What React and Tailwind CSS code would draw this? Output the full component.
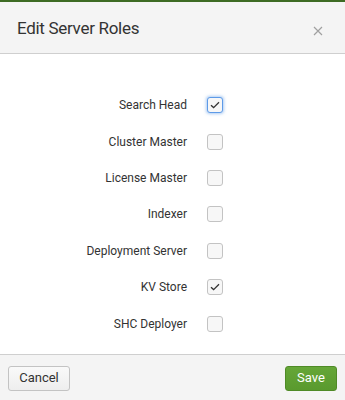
import { useState } from 'react';

const ROLES = [
  { label: 'Search Head', checked: true, focus: true },
  { label: 'Cluster Master', checked: false },
  { label: 'License Master', checked: false },
  { label: 'Indexer', checked: false },
  { label: 'Deployment Server', checked: false },
  { label: 'KV Store', checked: true },
  { label: 'SHC Deployer', checked: false },
];

const Check = () => (
  <svg width="10" height="8" viewBox="0 0 10 8" fill="none">
    <path d="M1 4.2 L3.6 6.6 L9 1.2" stroke="#333" strokeWidth="1.3" />
  </svg>
);

function RoleRow({ role }) {
  const [checked, setChecked] = useState(role.checked);
  return (
    <div className="flex items-center h-[36.4px]">
      <div className="w-[187px] text-right text-[12px] text-[#333]">{role.label}</div>
      <button
        onClick={() => setChecked(!checked)}
        className={`ml-[20px] w-[16px] h-[16px] rounded-[3px] border flex items-center justify-center bg-[#f7f7f7] ${
          role.focus ? 'border-[#5e9be8] shadow-[0_0_3px_1px_rgba(94,155,232,0.5)]' : 'border-[#c3c3c3]'
        }`}
      >
        {checked && <Check />}
      </button>
    </div>
  );
}

export default function App() {
  return (
    <div className="w-[345px] h-[400px] bg-white flex flex-col font-['Roboto',_'Liberation_Sans',_sans-serif] overflow-hidden">
      <div className="h-[2px] bg-[#3d6b24]" />
      {/* Header */}
      <div className="h-[52px] bg-[#f4f4f4] border-b border-[#cfcfcf] flex items-center justify-between pl-[17px] pr-[22px]">
        <h1 className="text-[17px] tracking-[-0.3px] text-[#333] pt-[2px]">Edit Server Roles</h1>
        <svg width="10" height="10" viewBox="0 0 10 10" className="mt-[6px]">
          <path d="M1 1 L9 9 M9 1 L1 9" stroke="#a0a0a0" strokeWidth="1.2" />
        </svg>
      </div>

      {/* Body */}
      <div className="flex-1 pt-[33px]">
        {ROLES.map((r) => (
          <RoleRow key={r.label} role={r} />
        ))}
      </div>

      {/* Footer */}
      <div className="h-[46px] bg-[#f4f4f4] border-t border-[#cfcfcf] flex items-center justify-between px-[8px] pt-[1px]">
        <button className="h-[25px] w-[62px] rounded-[3px] border border-[#c3c3c3] bg-gradient-to-b from-[#f9f9f9] to-[#eeeeee] text-[13px] text-[#333]">
          Cancel
        </button>
        <button className="h-[25px] w-[52px] rounded-[3px] border border-[#4f8a26] bg-gradient-to-b from-[#65a637] to-[#5a9a2e] text-[13px] text-white">
          Save
        </button>
      </div>
    </div>
  );
}
